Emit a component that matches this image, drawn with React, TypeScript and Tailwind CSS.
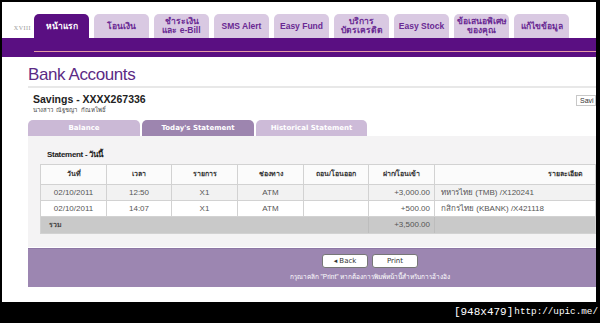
import React from "react";

const tabs: { label: string[]; active?: boolean }[] = [
  { label: ["หน้าแรก"], active: true },
  { label: ["โอนเงิน"] },
  { label: ["ชำระเงิน", "และ e-Bill"] },
  { label: ["SMS Alert"] },
  { label: ["Easy Fund"] },
  { label: ["บริการ", "บัตรเครดิต"] },
  { label: ["Easy Stock"] },
  { label: ["ข้อเสนอพิเศษ", "ของคุณ"] },
  { label: ["แก้ไขข้อมูล"] },
];

const cols = "grid grid-cols-[66px_65px_66px_66px_65px_66px_1fr]";
const cell = "border-r border-[#d2d2d2] flex items-center";

export default function App() {
  return (
    <div className="w-[600px] h-[323px] bg-black overflow-hidden" style={{ fontFamily: "'Liberation Sans', Arial, sans-serif" }}>
      <div className="ml-[2px] mt-[2px] w-[594px] h-[300px] bg-white overflow-hidden flex flex-col">
        {/* top nav */}
        <div className="flex items-end pt-[12px] h-[36px]">
          <div className="w-[32px] flex justify-end pr-[3px] pb-[5px]">
            <span className="text-[6px] text-[#999] tracking-[0.5px]" style={{ fontFamily: "'Liberation Serif', serif" }}>XVIII</span>
          </div>
          <div className="flex gap-[5px] h-[24px]">
            {tabs.map((t, i) => (
              <div
                key={i}
                className={
                  "w-[55px] h-[24px] rounded-t-[5px] flex flex-col items-center justify-center leading-[9px] text-[8.5px] font-semibold " +
                  (t.active ? "bg-[#5a0f82] text-white" : "bg-[#d9c9e2] text-[#6a2a93]")
                }
              >
                {t.label.map((l, j) => (
                  <span key={j}>{l}</span>
                ))}
              </div>
            ))}
          </div>
        </div>
        <div className="h-[19px] bg-[#5a0f82] pt-[13px]">
          <div className="ml-[32px] h-[1px] bg-[#e59ca6]" />
        </div>

        {/* body */}
        <div className="ml-[26px] flex flex-col">
          <div className="h-[29px] pt-[8px] text-[17px] leading-[20px] text-[#5b2a85] tracking-[-0.4px]">Bank Accounts</div>
          <div className="h-[2px] bg-[#e8e8e8]" />
          <div className="flex justify-between pt-[6px] h-[32px]">
            <div className="pl-[5px] flex flex-col">
              <span className="text-[10.5px] leading-[11px] font-bold text-[#222]">Savings - XXXX267336</span>
              <span className="text-[6px] leading-[9px] text-[#444] mt-[1px]">นางสาว&nbsp; ณัฐชญา&nbsp; กัณหโพธิ์</span>
            </div>
            <div className="h-[11px] w-[20px] border border-[#c8c8c8] bg-white text-[7px] leading-[9px] pl-[3px] mt-[1px] text-[#333] overflow-hidden">Savi</div>
          </div>
          {/* sub tabs */}
          <div className="flex gap-[2px] h-[16px]" style={{ fontFamily: "'DejaVu Sans', Verdana, sans-serif" }}>
            <div className="w-[112px] rounded-t-[5px] bg-[#cbb9d6] text-white text-[7px] font-bold flex items-center justify-center">Balance</div>
            <div className="w-[112px] rounded-t-[5px] bg-[#9d85af] text-white text-[7px] font-bold flex items-center justify-center">Today's Statement</div>
            <div className="w-[111px] rounded-t-[5px] bg-[#cdbbd8] text-white text-[7px] font-bold flex items-center justify-center">Historical Statement</div>
          </div>
          {/* content */}
          <div className="bg-[#f4f3f4] h-[111px] pl-[12px] flex flex-col">
            <div className="pl-[7px] pt-[14px] h-[28px] text-[8px] leading-[10px] font-bold text-[#222] tracking-[-0.3px]">Statement - วันนี้</div>
            <div className="border border-[#d2d2d2] text-[8px] text-[#555]">
              <div className={cols + " h-[20px] bg-[#fbfbfb] border-b border-[#d2d2d2] font-bold text-[#333] text-[7px]"}>
                <div className={cell + " justify-center"}>วันที่</div>
                <div className={cell + " justify-center"}>เวลา</div>
                <div className={cell + " justify-center"}>รายการ</div>
                <div className={cell + " justify-center"}>ช่องทาง</div>
                <div className={cell + " justify-center"}>ถอน/โอนออก</div>
                <div className={cell + " justify-center"}>ฝาก/โอนเข้า</div>
                <div className="flex items-center justify-end pr-[12px]">รายละเอียด</div>
              </div>
              <div className={cols + " h-[16px] bg-[#f2f2f2] border-b border-[#d2d2d2]"}>
                <div className={cell + " justify-center"}>02/10/2011</div>
                <div className={cell + " justify-center"}>12:50</div>
                <div className={cell + " justify-center"}>X1</div>
                <div className={cell + " justify-center"}>ATM</div>
                <div className={cell}></div>
                <div className={cell + " justify-end pr-[4px]"}>+3,000.00</div>
                <div className="flex items-center pl-[6px]">ทหารไทย (TMB) /X120241</div>
              </div>
              <div className={cols + " h-[16px] bg-white border-b border-[#d2d2d2]"}>
                <div className={cell + " justify-center"}>02/10/2011</div>
                <div className={cell + " justify-center"}>14:07</div>
                <div className={cell + " justify-center"}>X1</div>
                <div className={cell + " justify-center"}>ATM</div>
                <div className={cell}></div>
                <div className={cell + " justify-end pr-[4px]"}>+500.00</div>
                <div className="flex items-center pl-[6px]">กสิกรไทย (KBANK) /X421118</div>
              </div>
              <div className={cols + " h-[16px] bg-[#c9c9c9]"}>
                <div className="flex items-center pl-[8px] font-bold text-[7px] text-[#444]">รวม</div>
                <div></div>
                <div></div>
                <div></div>
                <div className="border-r border-[#bdbdbd]"></div>
                <div className="border-r border-[#bdbdbd] flex items-center justify-end pr-[4px]">+3,500.00</div>
                <div></div>
              </div>
            </div>
          </div>
          <div className="h-[1px] bg-white" />
          {/* footer */}
          <div className="h-[39px] bg-[#9c86b1] border-t border-[#8e77a5] flex">
            <div className="ml-[257px] w-[170px] shrink-0 flex flex-col items-center pt-[5px]">
              <div className="flex gap-[4px]" style={{ fontFamily: "'DejaVu Sans', Verdana, sans-serif" }}>
                <div className="w-[46px] h-[14px] bg-white border border-[#777] rounded-[3px] text-[7px] text-[#333] flex items-center justify-center">◂ Back</div>
                <div className="w-[46px] h-[14px] bg-white border border-[#777] rounded-[3px] text-[7px] text-[#333] flex items-center justify-center">Print</div>
              </div>
              <div className="mt-[4px] text-[6.5px] text-white whitespace-nowrap">กรุณาคลิก "Print" หากต้องการพิมพ์หน้านี้สำหรับการอ้างอิง</div>
            </div>
          </div>
        </div>
      </div>
      <div className="flex justify-end items-end pr-[2px] pt-[3px] text-white leading-[14px]" style={{ fontFamily: "'Liberation Mono', 'DejaVu Sans Mono', monospace" }}>
        <span className="text-[11px]">[948x479]</span>
        <span className="text-[9.3px] ml-[1px]">http://upic.me/</span>
      </div>
    </div>
  );
}
